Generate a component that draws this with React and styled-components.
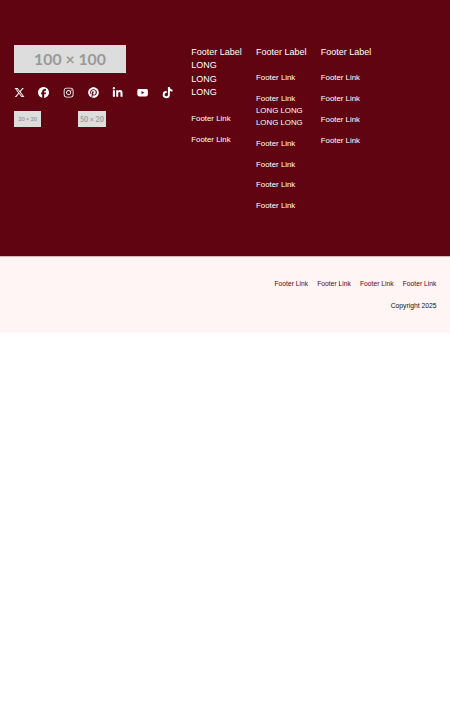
import React from 'react';
import styled, { createGlobalStyle } from 'styled-components';
import { FaXTwitter, FaFacebook, FaInstagram, FaPinterest, FaLinkedinIn, FaYoutube, FaTiktok } from 'react-icons/fa6';

const GlobalStyle = createGlobalStyle`
  * { box-sizing: border-box; }
  body { margin: 0; background: #fff; font-family: "Liberation Sans", Arial, sans-serif; }
`;

const Main = styled.footer`
  display: flex;
  height: 256px;
  padding: 45px 14px 0;
  background: #600412;
  color: #fff;
`;

const Brand = styled.div`
  width: 177.25px;
  flex: none;
`;

const Placeholder = styled.div`
  display: flex;
  align-items: center;
  justify-content: center;
  width: ${(p) => p.$w}px;
  height: ${(p) => p.$h}px;
  background: #ddd;
  color: #999;
  font: 700 ${(p) => p.$size}px/1 Lato, sans-serif;
  white-space: nowrap;
`;

const Socials = styled.nav`
  display: flex;
  gap: 13.5px;
  margin: 13.5px 0 0 -0.6px;
`;

const SocialLink = styled.a`
  display: flex;
  align-items: center;
  justify-content: center;
  width: 11.25px;
  height: 11.25px;
  color: #fff;
  svg { display: block; flex: none; overflow: visible; width: ${(p) => p.$size}px; height: ${(p) => p.$size}px; }
`;

const Badges = styled.div`
  display: flex;
  gap: 36.7px;
  margin-top: 13.6px;
`;

const Columns = styled.div`
  display: flex;
  align-items: flex-start;
  gap: 14.2px;
  padding-top: 0.6px;
`;

const Column = styled.section`
  flex: none;
`;

const Label = styled.h2`
  margin: 0 0 13.3px;
  font-size: 9px;
  font-weight: 400;
  line-height: 13.5px;
  white-space: pre-line;
`;

const Links = styled.div`
  display: flex;
  flex-direction: column;
  gap: 9px;
`;

const Link = styled.a`
  color: #fff;
  font-size: 7.875px;
  line-height: 11.84px;
  white-space: pre-line;
`;

const Bottom = styled.div`
  display: flex;
  flex-direction: column;
  align-items: flex-end;
  height: 77px;
  padding: 22px 13.5px 0;
  background: #fff5f4;
  border-top: 1px solid #dcb5b9;
  color: #111;
  font-size: 6.75px;
  line-height: 10.125px;
`;

const LegalLinks = styled.nav`
  display: flex;
  gap: 9px;
  margin-bottom: 12px;
`;

const LegalLink = styled.a`
  color: #600412;
`;

const socials = [
  [FaXTwitter, 11],
  [FaFacebook, 11],
  [FaInstagram, 11.25],
  [FaPinterest, 11],
  [FaLinkedinIn, 11.25],
  [FaYoutube, 11.25],
  [FaTiktok, 11.25],
];

const columns = [
  { label: 'Footer Label\nLONG\nLONG\nLONG', links: ['Footer Link', 'Footer Link'] },
  {
    label: 'Footer Label',
    links: ['Footer Link', 'Footer Link\nLONG LONG\nLONG LONG', 'Footer Link', 'Footer Link', 'Footer Link', 'Footer Link'],
  },
  { label: 'Footer Label', links: ['Footer Link', 'Footer Link', 'Footer Link', 'Footer Link'] },
];

export default function App() {
  return (
    <>
      <GlobalStyle />
      <Main>
        <Brand>
          <Placeholder $w={112} $h={28} $size={15.8}>100 × 100</Placeholder>
          <Socials>
            {socials.map(([Icon, size], i) => (
              <SocialLink key={i} $size={size}><Icon /></SocialLink>
            ))}
          </Socials>
          <Badges>
            <Placeholder $w={27.3} $h={15.75} $size={5.6}>20 × 20</Placeholder>
            <Placeholder $w={27.75} $h={15.75} $size={7}>50 × 20</Placeholder>
          </Badges>
        </Brand>
        <Columns>
          {columns.map((column, i) => (
            <Column key={i}>
              <Label>{column.label}</Label>
              <Links>
                {column.links.map((text, j) => <Link key={j}>{text}</Link>)}
              </Links>
            </Column>
          ))}
        </Columns>
      </Main>
      <Bottom>
        <LegalLinks>
          {[0, 1, 2, 3].map((i) => <LegalLink key={i}>Footer Link</LegalLink>)}
        </LegalLinks>
        <span>Copyright 2025</span>
      </Bottom>
    </>
  );
}
